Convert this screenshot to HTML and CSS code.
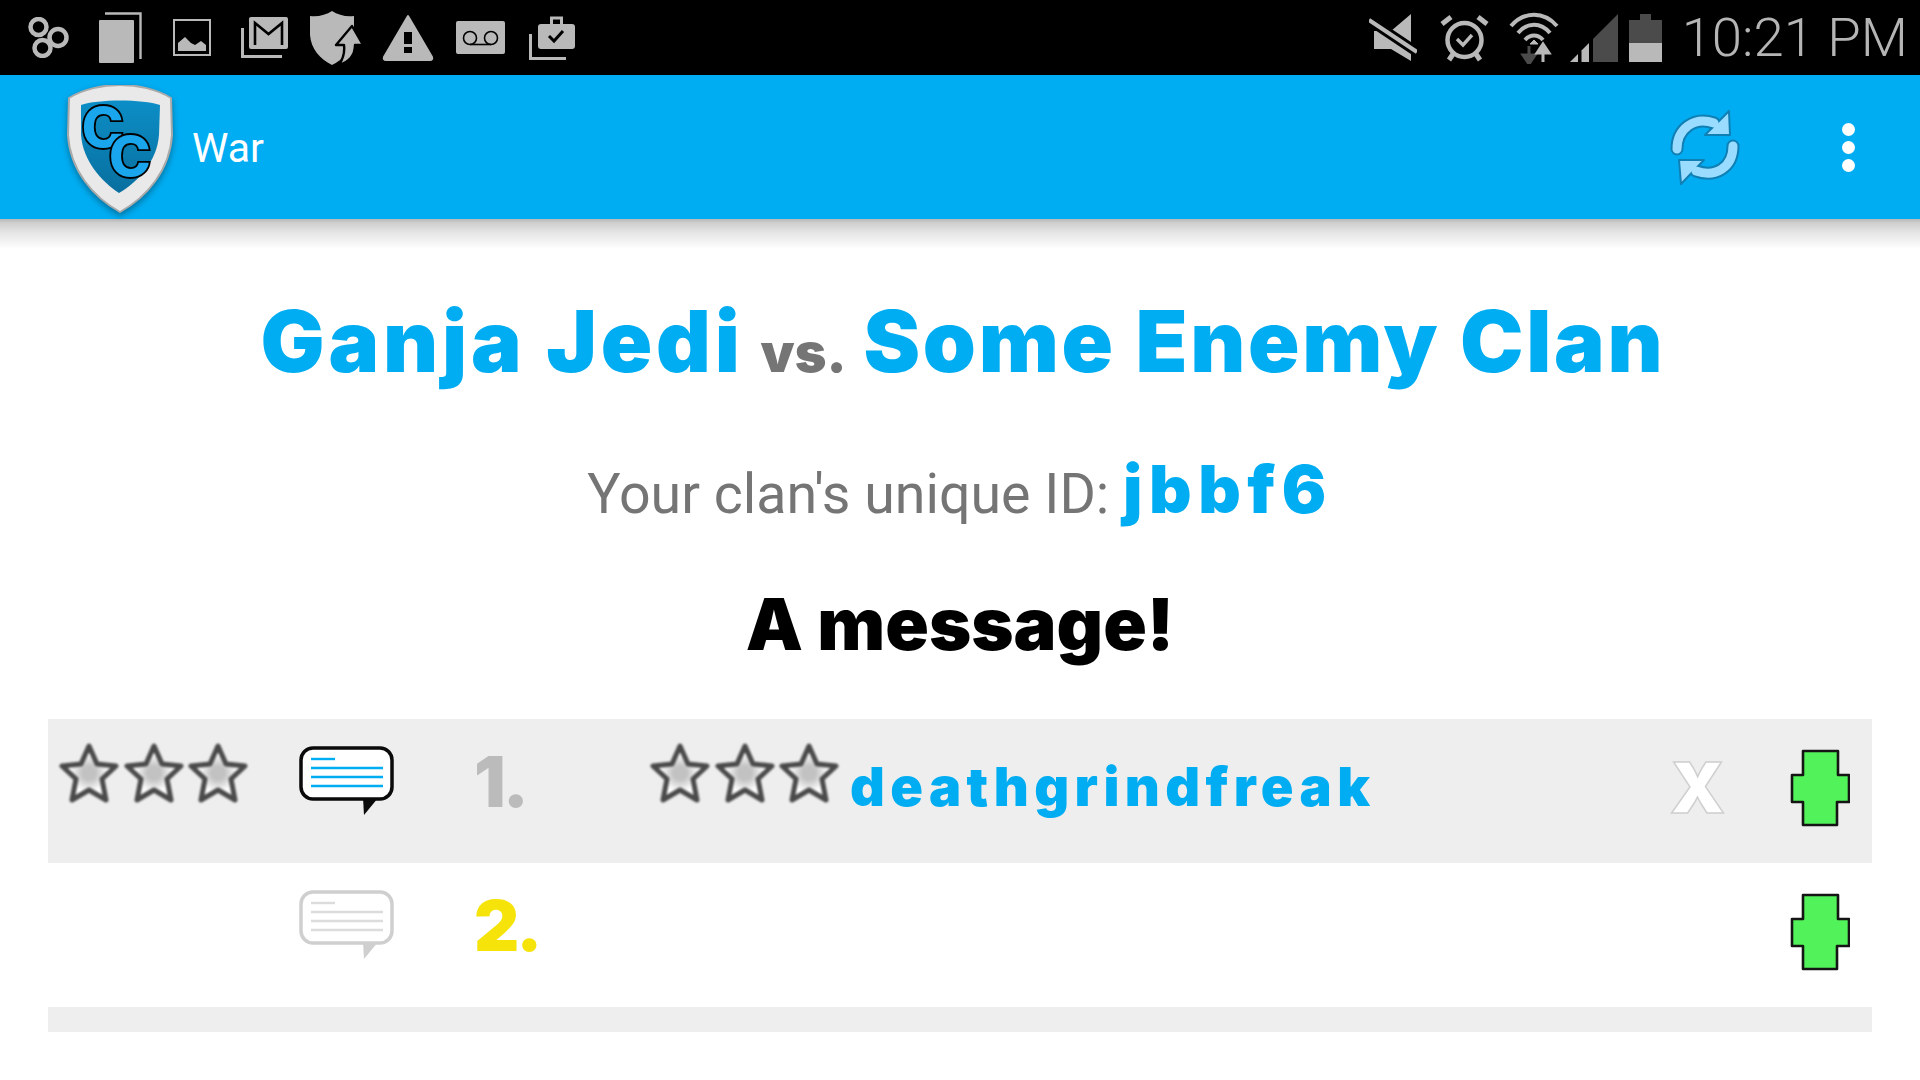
FILE: index.html
```html
<!DOCTYPE html>
<html>
  <head>
    <meta charset="UTF-8">
    <title>War</title>
    <link rel="stylesheet" href="styles.css">
  </head>
  <body>
    <svg class="defs" width="0" height="0">
      <defs>
        <radialGradient id="star-fill">
          <stop offset="0.25" stop-color="#c2c2c2"/>
          <stop offset="0.7" stop-color="#ffffff"/>
        </radialGradient>
        <linearGradient id="shield-fill" x1="0" y1="0" x2="0" y2="1">
          <stop offset="0" stop-color="#0c8ec6"/>
          <stop offset="1" stop-color="#086f9f"/>
        </linearGradient>
        <symbol id="star" viewBox="0 0 60 60">
          <path d="M30 3 L38 21 L57 23 L43 36 L47 57 L30 47 L13 57 L17 36 L3 23 L22 21 Z" fill="url(#star-fill)" stroke="#4a4a4a" stroke-width="5" stroke-linejoin="round"/>
        </symbol>
        <symbol id="bubble" viewBox="0 0 95 70">
          <path d="M64 52 H79 L65 69 Z" style="fill: var(--bubble-edge)"/>
          <rect x="2" y="2" width="91" height="51" rx="12" fill="#fff" style="stroke: var(--bubble-edge)" stroke-width="3.5"/>
          <g style="stroke: var(--bubble-line)" stroke-width="2.4">
            <path d="M12 13 H36"/>
            <path d="M12 22 H84"/>
            <path d="M12 31 H84"/>
            <path d="M12 40 H84"/>
          </g>
        </symbol>
        <symbol id="plus" viewBox="0 0 60 78">
          <path d="M13 2 H48 V26 H59 V53 H47 V76 H13 V53 H2 V26 H13 Z" fill="#52f25a" stroke="#151515" stroke-width="2.6" stroke-linejoin="round"/>
        </symbol>
      </defs>
    </svg>

    <div class="status-bar">
      <div class="status-left">
        <span class="status-cell">
          <svg width="41" height="41" viewBox="0 0 41 41" fill="none" stroke="#b9b9b9" stroke-width="4.5">
            <circle cx="10.5" cy="10" r="8"/>
            <circle cx="30" cy="20.5" r="8.5"/>
            <circle cx="14.5" cy="31" r="8"/>
          </svg>
        </span>
        <span class="status-cell">
          <svg width="43" height="51" viewBox="0 0 43 51">
            <path d="M6 1.5 H41.5 V47" fill="none" stroke="#b9b9b9" stroke-width="2.4"/>
            <rect x="0" y="8" width="35" height="43" rx="1" fill="#b9b9b9"/>
          </svg>
        </span>
        <span class="status-cell">
          <svg width="38" height="37" viewBox="0 0 38 37">
            <rect x="1" y="1" width="36" height="35" fill="none" stroke="#b9b9b9" stroke-width="2"/>
            <path d="M5 32 V24 L12 18 L18 24 L22 26 L28 22 L33 26 V32 Z" fill="#b9b9b9"/>
          </svg>
        </span>
        <span class="status-cell">
          <svg width="47" height="41" viewBox="0 0 47 41">
            <path d="M1.5 11 V39.5 H41" fill="none" stroke="#b9b9b9" stroke-width="3"/>
            <rect x="8" y="0" width="39" height="32" rx="2" fill="#b9b9b9"/>
            <path d="M14 28 V6 L27.5 17 L41 6 V28" fill="none" stroke="#000" stroke-width="2.6"/>
          </svg>
        </span>
        <span class="status-cell">
          <svg width="53" height="54" viewBox="0 0 53 54">
            <path d="M22 0 C28 4 36 6 44 5 V26 C42 40 32 49 22 54 C10 48 1 38 0 24 V5 C8 6 16 4 22 0 Z" fill="#b9b9b9"/>
            <path d="M42 15 L53 34 H45 C45 44 39 51 29 54 C33 48 35 42 34 34 H26 Z" fill="#b9b9b9" stroke="#000" stroke-width="2.4" stroke-linejoin="round"/>
          </svg>
        </span>
        <span class="status-cell">
          <svg width="52" height="47" viewBox="0 0 52 47">
            <path d="M26 2 L50 43 Q51 46 48 46 H4 Q1 46 2 43 Z" fill="#b9b9b9" stroke="#b9b9b9" stroke-width="2" stroke-linejoin="round"/>
            <rect x="22" y="18" width="8" height="12" fill="#000"/>
            <rect x="22" y="33" width="8" height="6" fill="#000"/>
          </svg>
        </span>
        <span class="status-cell">
          <svg width="49" height="33" viewBox="0 0 49 33">
            <rect width="49" height="33" rx="2" fill="#b9b9b9"/>
            <circle cx="14" cy="17" r="6.5" fill="none" stroke="#000" stroke-width="1.6"/>
            <circle cx="35" cy="17" r="6.5" fill="none" stroke="#000" stroke-width="1.6"/>
            <path d="M14 23.5 H35" stroke="#000" stroke-width="1.6"/>
          </svg>
        </span>
        <span class="status-cell">
          <svg width="46" height="44" viewBox="0 0 46 44">
            <path d="M1.5 18 V42.5 H37" fill="none" stroke="#b9b9b9" stroke-width="3"/>
            <rect x="9" y="8" width="37" height="25" rx="3" fill="#b9b9b9"/>
            <path d="M22.5 8 V2 H32.5 V8" fill="none" stroke="#b9b9b9" stroke-width="3"/>
            <path d="M20 20 L25 25 L34 15" fill="none" stroke="#000" stroke-width="3"/>
          </svg>
        </span>
      </div>
      <div class="status-right">
        <svg class="icon-mute" width="48" height="47" viewBox="0 0 48 47">
          <path d="M5 17 H22 L42 0 V47 L22 35 H5 Z" fill="#b9b9b9"/>
          <path d="M0 6 L48 38" stroke="#000" stroke-width="10"/>
          <path d="M0 6 L48 38" stroke="#b9b9b9" stroke-width="4"/>
        </svg>
        <svg class="icon-alarm" width="49" height="48" viewBox="0 0 49 48" fill="none" stroke="#b9b9b9">
          <circle cx="24.5" cy="26" r="17" stroke-width="4.5"/>
          <path d="M2 10 L11 3" stroke-width="5"/>
          <path d="M47 10 L38 3" stroke-width="5"/>
          <path d="M9 46 L13 40" stroke-width="5"/>
          <path d="M40 46 L36 40" stroke-width="5"/>
          <path d="M17 25 L23 31 L32 21" stroke-width="3.4"/>
        </svg>
        <svg class="icon-wifi" width="50" height="52" viewBox="0 0 50 52" fill="none" stroke="#b9b9b9" stroke-width="4">
          <path d="M2 14 C15 -1 35 -1 48 14"/>
          <path d="M9 21 C18 10 32 10 41 21"/>
          <path d="M16 28 C21 22 29 22 34 28"/>
          <path d="M21 32 L25 28 L29 32 Z" fill="#b9b9b9" stroke-width="1"/>
          <path d="M20 34 V44 M14 43 L20 52 L26 43 Z" fill="#4b4b4b" stroke="#4b4b4b" stroke-width="3"/>
          <path d="M34 50 V40 M28 41 L34 32 L40 41 Z" fill="#b9b9b9" stroke-width="3"/>
        </svg>
        <svg class="icon-signal" width="48" height="48" viewBox="0 0 48 48">
          <path d="M0 48 L8 40 V48 Z" fill="#b9b9b9"/>
          <path d="M11.5 36.5 L19 29 V48 H11.5 Z" fill="#b9b9b9"/>
          <path d="M23 25 L48 0 V48 H23 Z" fill="#4b4b4b"/>
        </svg>
        <svg class="icon-battery" width="33" height="48" viewBox="0 0 33 48">
          <path d="M11 0 H22 V6 H33 V29 H0 V6 H11 Z" fill="#4b4b4b"/>
          <rect y="29" width="33" height="19" fill="#b9b9b9"/>
        </svg>
        <span class="clock">10:21 PM</span>
      </div>
    </div>

    <div class="app-bar">
      <svg class="logo" width="106" height="132" viewBox="0 0 106 132">
        <path d="M53 0 C70 0 90 4 104 13 L105 50 C103 85 80 112 53 127 C26 112 3 85 1 50 L2 13 C16 4 36 0 53 0 Z" fill="#e9e9e9" stroke="#a9a9a9" stroke-width="2"/>
        <path d="M14 20 C30 14 76 14 93 20 L92 50 C90 76 72 96 52 108 C34 96 16 76 14 50 Z" fill="url(#shield-fill)"/>
        <text class="logo-letter" x="14" y="63">C<tspan dx="-16" dy="29">C</tspan></text>
      </svg>
      <span class="app-title">War</span>
      <div class="app-actions">
        <svg class="icon-refresh" width="70" height="76" viewBox="0 0 70 76">
          <g fill="none" stroke="#0f7fb4" stroke-width="13" stroke-linecap="round">
            <path d="M7 40 C7 20 24 7 44 14"/>
            <path d="M63 37 C63 58 46 69 26 62"/>
          </g>
          <path d="M59 2 L60 26 L35 26 Z" fill="#9adcff" stroke="#0f7fb4" stroke-width="2" stroke-linejoin="round"/>
          <path d="M11 75 L9 51 L34 51 Z" fill="#9adcff" stroke="#0f7fb4" stroke-width="2" stroke-linejoin="round"/>
          <g fill="none" stroke="#9adcff" stroke-width="9" stroke-linecap="round">
            <path d="M7 40 C7 20 24 7 44 14"/>
            <path d="M63 37 C63 58 46 69 26 62"/>
          </g>
        </svg>
        <div class="overflow-dots">
          <span class="dot"></span>
          <span class="dot"></span>
          <span class="dot"></span>
        </div>
      </div>
    </div>
    <div class="app-shadow"></div>

    <h1 class="title"><span class="title-home">Ganja Jedi</span> <span class="title-vs">vs.</span> <span class="title-enemy">Some Enemy Clan</span></h1>
    <p class="clan-id">Your clan's unique ID: <span class="clan-code">jbbf6</span></p>
    <h2 class="message">A message!</h2>

    <div class="war-list">
      <div class="row row-shade">
        <div class="stars row-stars">
          <svg class="star"><use href="#star"/></svg>
          <svg class="star"><use href="#star"/></svg>
          <svg class="star"><use href="#star"/></svg>
        </div>
        <svg class="bubble bubble-active"><use href="#bubble"/></svg>
        <span class="rank rank-done">1.</span>
        <div class="player">
          <div class="stars">
            <svg class="star"><use href="#star"/></svg>
            <svg class="star"><use href="#star"/></svg>
            <svg class="star"><use href="#star"/></svg>
          </div>
          <span class="player-name">deathgrindfreak</span>
        </div>
        <span class="remove">X</span>
        <svg class="plus"><use href="#plus"/></svg>
      </div>
      <div class="row">
        <div class="row-stars"></div>
        <svg class="bubble bubble-idle"><use href="#bubble"/></svg>
        <span class="rank rank-open">2.</span>
        <div class="player"></div>
        <span></span>
        <svg class="plus"><use href="#plus"/></svg>
      </div>
      <div class="row-end"></div>
    </div>
  </body>
</html>
```

FILE: styles.css
```css
body {
  margin: 0;
  height: 1080px;
  overflow: hidden;
  background-color: #fff;
  font-family: Roboto, sans-serif;
}

.defs {
  position: absolute;
}

.status-bar {
  display: flex;
  justify-content: space-between;
  align-items: center;
  height: 75px;
  padding: 0 12px 0 12px;
  background-color: #000;
}

.status-left,
.status-right {
  display: flex;
  align-items: center;
}

.status-cell {
  display: flex;
  justify-content: center;
  width: 72px;
}

.icon-alarm {
  margin-left: 23px;
}

.icon-wifi {
  margin-left: 20px;
}

.icon-signal,
.icon-battery {
  margin-left: 11px;
}

.clock {
  margin-left: 20px;
  color: #b5b5b5;
  font-size: 54.5px;
  font-weight: 300;
  line-height: 75px;
}

.app-bar {
  display: flex;
  align-items: center;
  height: 144px;
  padding: 0 65px 0 67px;
  background-color: #00adf2;
}

.logo {
  margin-top: 8px;
  filter: drop-shadow(0 3px 3px rgba(0, 0, 0, 0.35));
}

.logo-letter {
  font-family: Inter, sans-serif;
  font-size: 58px;
  font-weight: 900;
  fill: #1aa6ec;
  stroke: #000;
  stroke-width: 1.8px;
}

.app-title {
  margin: 2px 0 0 19px;
  color: #fff;
  font-size: 41px;
}

.app-actions {
  display: flex;
  align-items: center;
  margin-left: auto;
}

.overflow-dots {
  display: flex;
  flex-direction: column;
  gap: 5px;
  margin-left: 102px;
}

.dot {
  width: 13px;
  height: 13px;
  border-radius: 50%;
  background-color: #fff;
}

.app-shadow {
  height: 30px;
  background: linear-gradient(#b8b8b8 0, #cfcfcf 4px, #e6e6e6 14px, #fff 30px);
}

.title {
  margin: 43px 0 0;
  padding-left: 6px;
  color: #00adf2;
  font-family: Inter, sans-serif;
  font-size: 85px;
  font-weight: 900;
  line-height: 100px;
  text-align: center;
  white-space: nowrap;
}

.title-home {
  letter-spacing: 3.8px;
}

.title-enemy {
  letter-spacing: 2.7px;
}

.title-vs {
  color: #757575;
  font-size: 54px;
}

.clan-id {
  margin: 51px 0 0;
  color: #757575;
  font-size: 55.5px;
  font-weight: 400;
  line-height: 70px;
  text-align: center;
}

.clan-code {
  color: #00adf2;
  font-family: Inter, sans-serif;
  font-size: 66px;
  font-weight: 900;
  letter-spacing: 6.5px;
}

.message {
  margin: 54px 0 0;
  color: #000;
  font-family: Inter, sans-serif;
  font-size: 72px;
  font-weight: 900;
  line-height: 80px;
  text-align: center;
}

.war-list {
  position: absolute;
  top: 719px;
  left: 48px;
  width: 1824px;
}

.row {
  display: grid;
  grid-template-columns: 251px 177px 174px 1fr 120px 82px;
  align-items: start;
  height: 144px;
}

.row-shade {
  background-color: #eee;
}

.row-end {
  height: 25px;
  background-color: #eee;
}

.row-stars {
  padding-left: 11px;
}

.stars {
  display: flex;
  gap: 4.5px;
  margin-top: 24px;
}

.star {
  width: 60px;
  height: 60px;
  filter: blur(0.9px);
}

.bubble {
  width: 95px;
  height: 70px;
  margin-top: 27px;
  filter: blur(0.5px);
}

.bubble-active {
  --bubble-edge: #0a0a0a;
  --bubble-line: #00adf2;
}

.bubble-idle {
  --bubble-edge: #cfcfcf;
  --bubble-line: #dcdcdc;
}

.rank {
  margin: 28px 0 0 -2px;
  font-family: Inter, sans-serif;
  font-size: 70px;
  font-weight: 900;
  letter-spacing: -3px;
  line-height: 70px;
}

.rank-done {
  color: #bbb;
}

.rank-open {
  color: #f6e30a;
}

.player {
  display: flex;
  align-items: flex-start;
  gap: 11px;
}

.player-name {
  margin-top: 33px;
  color: #00adf2;
  font-family: Inter, sans-serif;
  font-size: 54px;
  font-weight: 900;
  letter-spacing: 5.4px;
  line-height: 70px;
}

.remove {
  margin-top: 34px;
  color: #fff;
  font-family: Inter, sans-serif;
  font-size: 70px;
  font-weight: 900;
  line-height: 70px;
  -webkit-text-stroke: 1.5px #cfcfcf;
}

.plus {
  width: 60px;
  height: 78px;
  margin-top: 30px;
  filter: blur(0.4px);
}
```
